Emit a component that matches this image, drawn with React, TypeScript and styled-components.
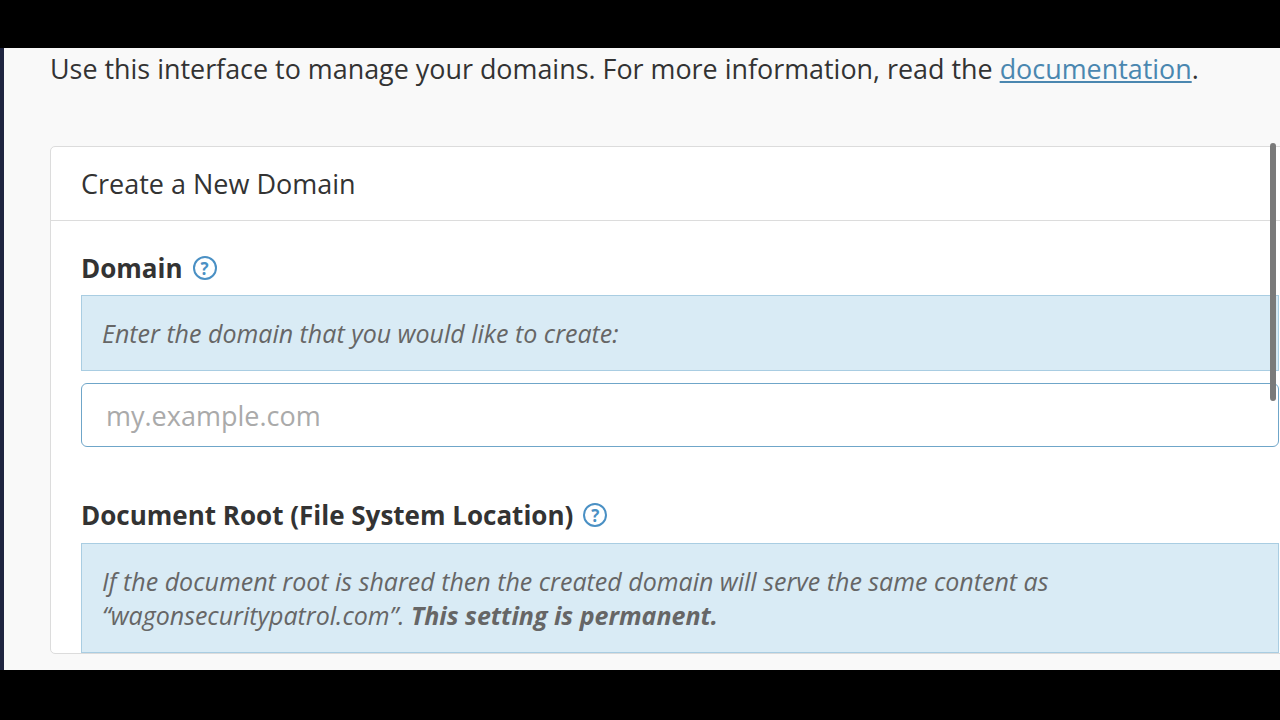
import React from 'react';
import styled, { createGlobalStyle } from 'styled-components';

const GlobalStyle = createGlobalStyle`
  html, body { margin: 0; padding: 0; background: #000; }
  body { font-family: 'Open Sans', 'Noto Sans', sans-serif; }
`;

const Screen = styled.div`
  width: 1280px;
  height: 720px;
  background: #000;
  padding-top: 48px;
  box-sizing: border-box;
`;

const Viewport = styled.div`
  position: relative;
  height: 622px;
  display: flex;
  overflow: hidden;
  background: #f9f9f9;
`;

const SideEdge = styled.div`
  width: 4px;
  background: #1f2540;
  flex-shrink: 0;
`;

const Content = styled.main`
  flex: 1;
  padding: 0 0 0 46px;
  min-width: 0;
`;

const Intro = styled.p`
  margin: 0;
  padding-top: 5px;
  font-size: 26.9px;
  line-height: 32px;
  color: #333;
  white-space: nowrap;
`;

const DocLink = styled.a`
  color: #4a87b0;
  text-decoration: underline;
`;

const Card = styled.section`
  margin-top: 61px;
  width: 1240px;
  background: #fff;
  border: 1px solid #dcdcdc;
  border-radius: 5px;
`;

const CardHeader = styled.div`
  height: 73px;
  padding: 0 30px;
  display: flex;
  align-items: center;
  font-size: 27px;
  color: #333;
  border-bottom: 1px solid #dcdcdc;
`;

const CardBody = styled.div`
  padding: 29px 12px 0 30px;
`;

const Label = styled.div`
  display: flex;
  align-items: center;
  gap: 10px;
  font-size: 26px;
  font-weight: 700;
  color: #333;
  height: 36px;
`;

const HelpIcon = styled.span`
  width: 24px;
  height: 24px;
  border: 2.5px solid #4a90c4;
  border-radius: 50%;
  color: #4a90c4;
  font-size: 17px;
  font-weight: 700;
  display: inline-flex;
  align-items: center;
  justify-content: center;
  box-sizing: border-box;
`;

const Note = styled.div<{ $tall?: boolean }>`
  margin-top: ${p => (p.$tall ? '10px' : '9px')};
  background: #d9ebf5;
  border: 1px solid #a9cde2;
  padding: ${p => (p.$tall ? '20px 20px' : '0 20px')};
  height: ${p => (p.$tall ? 'auto' : '76px')};
  box-sizing: border-box;
  display: flex;
  align-items: center;
  font-style: italic;
  font-size: 25px;
  line-height: 34px;
  color: #666;
`;

const Input = styled.input`
  display: block;
  margin-top: 12px;
  width: 100%;
  height: 64px;
  box-sizing: border-box;
  border: 1.5px solid #6fa6c9;
  border-radius: 6px;
  padding: 0 24px;
  font-family: inherit;
  font-size: 27px;
  color: #333;
  outline: none;
  &::placeholder { color: #aaa; }
`;

const Field = styled.div<{ $gap?: number }>`
  margin-top: ${p => p.$gap ?? 0}px;
`;

const Scrollbar = styled.div`
  position: absolute;
  right: 4px;
  top: 95px;
  width: 6px;
  height: 258px;
  border-radius: 3px;
  background: #7a7a7a;
`;

export default function App() {
  return (
    <>
      <GlobalStyle />
      <Screen>
        <Viewport>
          <SideEdge />
          <Content>
            <Intro>
              Use this interface to manage your domains. For more information, read the{' '}
              <DocLink href="#">documentation</DocLink>.
            </Intro>
            <Card>
              <CardHeader>Create a New Domain</CardHeader>
              <CardBody>
                <Field>
                  <Label>Domain <HelpIcon>?</HelpIcon></Label>
                  <Note>Enter the domain that you would like to create:</Note>
                  <Input placeholder="my.example.com" />
                </Field>
                <Field $gap={50}>
                  <Label>Document Root (File System Location) <HelpIcon>?</HelpIcon></Label>
                  <Note $tall>
                    <span>
                      If the document root is shared then the created domain will serve the same content as
                      “wagonsecuritypatrol.com”. <b>This setting is permanent.</b>
                    </span>
                  </Note>
                </Field>
              </CardBody>
            </Card>
          </Content>
          <Scrollbar />
        </Viewport>
      </Screen>
    </>
  );
}
